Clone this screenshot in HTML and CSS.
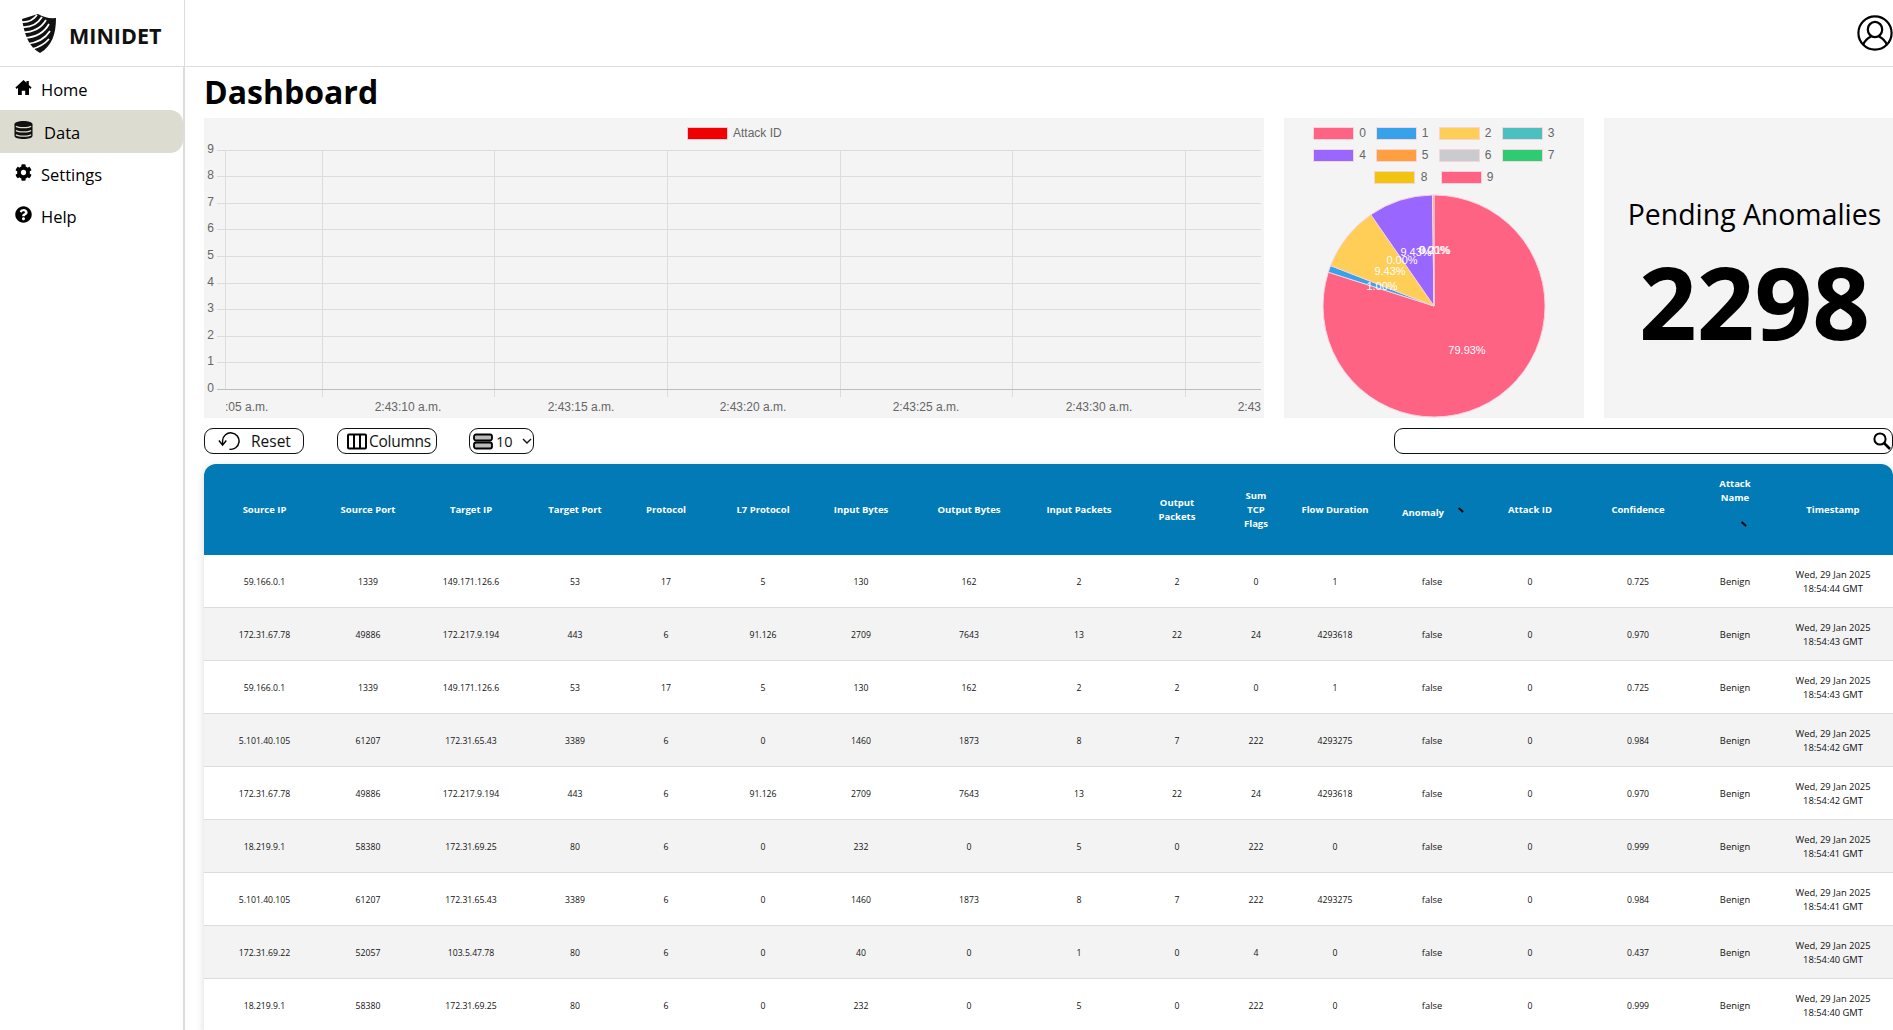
FILE: index.html
```html
<!DOCTYPE html>
<html>

<head>
    <meta charset="utf-8">
    <title>MINIDET</title>
    <link rel="stylesheet" href="styles.css">
</head>

<body>
    <header class="topbar">
        <div class="brand">
            <svg class="brandLogo" viewBox="0 0 34 39">
                <path d="M0 5 L16 0 Q24 5 34 4 C34 20 30 32 18 39 C6 33 2 18 0 5 Z" fill="#111"/>
                <g fill="none" stroke="#fff" stroke-width="1.7">
                    <path d="M-1 8 Q9 9 15 1"/>
                    <path d="M0 13 Q13 14 20 3"/>
                    <path d="M0 18.5 Q17 18 24 6"/>
                    <path d="M2 24 Q20 23 27 10"/>
                    <path d="M5 30 Q21 28 28 17"/>
                    <path d="M10 35 Q21 32 27 25"/>
                </g>
            </svg>
            <span class="brandName">MINIDET</span>
        </div>
        <svg class="userIcon" viewBox="0 0 36 36" fill="none" stroke="#000" stroke-width="2.2">
            <circle cx="18" cy="18" r="16.6"/>
            <ellipse cx="18" cy="14.5" rx="7.2" ry="7.6"/>
            <path d="M6 30 C8 24.5 12 22.5 14 21.5 M30 30 C28 24.5 24 22.5 22 21.5"/>
        </svg>
    </header>

    <div class="layout">
        <nav class="sidebar">
            <a class="navItem">
                <svg class="navIcon" viewBox="0 0 16 16"><path d="M8 1 L0.4 8 L1.6 9.3 L2.8 8.2 V15 H6.4 V11 H9.6 V15 H13.2 V8.2 L14.4 9.3 L15.6 8 L13 5.6 V1.8 H10.8 V3.6 Z"/></svg>
                Home
            </a>
            <a class="navItem navItemActive">
                <svg class="navIcon navIconData" viewBox="0 0 20 20">
                    <path d="M10 0.5 C15 0.5 19.5 1.8 19.5 4 L19.5 16 C19.5 18.2 15 19.5 10 19.5 C5 19.5 0.5 18.2 0.5 16 L0.5 4 C0.5 1.8 5 0.5 10 0.5 Z" fill="#111"/>
                    <g fill="none" stroke="#dddcd0" stroke-width="1.4">
                        <path d="M2 6 C5 8 15 8 18 6"/>
                        <path d="M2 10.5 C5 12.5 15 12.5 18 10.5"/>
                        <path d="M2 15 C5 17 15 17 18 15"/>
                    </g>
                </svg>
                <span class="navDataLabel">Data</span>
            </a>
            <a class="navItem">
                <svg class="navIcon" viewBox="0 0 512 512"><path d="M487.4 315.7l-42.6-24.6c4.3-23.2 4.3-47 0-70.2l42.6-24.6c4.9-2.8 7.1-8.6 5.5-14-11.1-35.6-30-67.8-54.7-94.6-3.8-4.1-10-5.1-14.8-2.3L380.8 110c-17.9-15.4-38.5-27.3-60.8-35.1V25.8c0-5.6-3.9-10.5-9.4-11.7-36.7-8.2-74.3-7.8-109.2 0-5.5 1.2-9.4 6.1-9.4 11.7V75c-22.2 7.9-42.8 19.8-60.8 35.1L88.7 85.5c-4.9-2.8-11-1.9-14.8 2.3-24.7 26.7-43.6 58.9-54.7 94.6-1.7 5.4.6 11.2 5.5 14L67.3 221c-4.3 23.2-4.3 47 0 70.2l-42.6 24.6c-4.9 2.8-7.1 8.6-5.5 14 11.1 35.6 30 67.8 54.7 94.6 3.8 4.1 10 5.1 14.8 2.3l42.6-24.6c17.9 15.4 38.5 27.3 60.8 35.1v49.2c0 5.6 3.9 10.5 9.4 11.7 36.7 8.2 74.3 7.8 109.2 0 5.5-1.2 9.4-6.1 9.4-11.7v-49.2c22.2-7.9 42.8-19.8 60.8-35.1l42.6 24.6c4.9 2.8 11 1.9 14.8-2.3 24.7-26.7 43.6-58.9 54.7-94.6 1.5-5.5-.7-11.3-5.6-14.1zM256 336c-44.1 0-80-35.9-80-80s35.9-80 80-80 80 35.9 80 80-35.9 80-80 80z"/></svg>
                Settings
            </a>
            <a class="navItem">
                <svg class="navIcon" viewBox="0 0 512 512"><path d="M504 256c0 136.997-111.043 248-248 248S8 392.997 8 256C8 119.083 119.043 8 256 8s248 111.083 248 248zM262.655 90c-54.497 0-89.255 22.957-116.549 63.758-3.536 5.286-2.353 12.415 2.715 16.258l34.699 26.31c5.205 3.947 12.621 3.008 16.665-2.122 17.864-22.658 30.113-35.797 57.303-35.797 20.429 0 45.698 13.148 45.698 32.958 0 14.976-12.363 22.667-32.534 33.976C247.128 238.528 216 254.941 216 296v4c0 6.627 5.373 12 12 12h56c6.627 0 12-5.373 12-12v-1.333c0-28.462 83.186-29.647 83.186-106.667 0-58.002-60.165-102-116.531-102zM256 338c-25.365 0-46 20.635-46 46 0 25.364 20.635 46 46 46s46-20.636 46-46c0-25.365-20.635-46-46-46z"/></svg>
                Help
            </a>
        </nav>

        <main class="content">
            <h1 class="pageTitle">Dashboard</h1>

            <section class="cards">
                <div class="card chartCard">
                    <svg class="chartSvg" viewBox="0 0 1060 300" width="1060" height="300">
                        <defs>
                            <clipPath id="plotClip"><rect x="22" y="0" width="1035" height="300"/></clipPath>
                        </defs>
                        <rect x="483.5" y="9.5" width="40" height="12" fill="#f00000" stroke="#f7c6cf"/>
                        <text class="chartLabel" x="529" y="19">Attack ID</text>
                        <g class="gridLines">
                            <path d="M13 32.5H1057M13 58.5H1057M13 85.5H1057M13 111.5H1057M13 138.5H1057M13 165.5H1057M13 191.5H1057M13 218.5H1057M13 244.5H1057"/>
                            <path d="M21.5 32V271M118.5 32V279M290.5 32V279M463.5 32V279M636.5 32V279M808.5 32V279M981.5 32V279"/>
                        </g>
                        <path class="axisLine" d="M13 271.5H1057"/>
                        <g class="chartLabel tickY">
                            <text x="10" y="35">9</text>
                            <text x="10" y="61">8</text>
                            <text x="10" y="88">7</text>
                            <text x="10" y="114">6</text>
                            <text x="10" y="141">5</text>
                            <text x="10" y="168">4</text>
                            <text x="10" y="194">3</text>
                            <text x="10" y="221">2</text>
                            <text x="10" y="247">1</text>
                            <text x="10" y="274">0</text>
                        </g>
                        <g class="chartLabel tickX" clip-path="url(#plotClip)">
                            <text x="31" y="293">2:43:05 a.m.</text>
                            <text x="204" y="293">2:43:10 a.m.</text>
                            <text x="377" y="293">2:43:15 a.m.</text>
                            <text x="549" y="293">2:43:20 a.m.</text>
                            <text x="722" y="293">2:43:25 a.m.</text>
                            <text x="895" y="293">2:43:30 a.m.</text>
                            <text x="1067" y="293">2:43:35 a.m.</text>
                        </g>
                    </svg>
                </div>

                <div class="card pieCard">
                    <svg class="chartSvg" viewBox="0 0 300 300" width="300" height="300">
                        <g class="legendBoxes">
                            <rect x="29.5" y="9.5" width="40" height="12" fill="#ff6384"/>
                            <rect x="92.5" y="9.5" width="40" height="12" fill="#36a2eb"/>
                            <rect x="155.5" y="9.5" width="40" height="12" fill="#ffce56"/>
                            <rect x="218.5" y="9.5" width="40" height="12" fill="#4bc0c0"/>
                            <rect x="29.5" y="31.5" width="40" height="12" fill="#9966ff"/>
                            <rect x="92.5" y="31.5" width="40" height="12" fill="#ff9f40"/>
                            <rect x="155.5" y="31.5" width="40" height="12" fill="#c9cbcf"/>
                            <rect x="218.5" y="31.5" width="40" height="12" fill="#2ecc71"/>
                            <rect x="90.5" y="53.5" width="40" height="12" fill="#f1c40f"/>
                            <rect x="157.5" y="53.5" width="40" height="12" fill="#ff6384"/>
                        </g>
                        <g class="chartLabel legendText">
                            <text x="78.5" y="19">0</text>
                            <text x="141" y="19">1</text>
                            <text x="204" y="19">2</text>
                            <text x="267" y="19">3</text>
                            <text x="78.5" y="41">4</text>
                            <text x="141" y="41">5</text>
                            <text x="204" y="41">6</text>
                            <text x="267" y="41">7</text>
                            <text x="140" y="63">8</text>
                            <text x="206" y="63">9</text>
                        </g>
                        <g class="pieSlices">
                            <path d="M150 188 L150 77 A111 111 0 1 1 44.3 154.2 Z" fill="#ff6384"/>
                            <path d="M150 188 L44.3 154.2 A111 111 0 0 1 46.6 147.6 Z" fill="#36a2eb"/>
                            <path d="M150 188 L46.6 147.6 A111 111 0 0 1 86.8 96.7 Z" fill="#ffce56"/>
                            <path d="M150 188 L86.8 96.7 A111 111 0 0 1 148.5 77 Z" fill="#9966ff"/>
                            <path d="M150 188 L148.5 77 A111 111 0 0 1 150 77 Z" fill="#ff9f40"/>
                        </g>
                        <g class="pieLabels">
                            <text x="183" y="236">79.93%</text>
                            <text x="98" y="172">1.00%</text>
                            <text x="106" y="157">9.43%</text>
                            <text x="118" y="146">0.00%</text>
                            <text x="132" y="138">9.43%</text>
                            <text x="150" y="136">0.00%</text>
                            <text x="151" y="136">0.21%</text>
                        </g>
                    </svg>
                </div>

                <div class="card pendingCard">
                    <div class="pendingTitle">Pending Anomalies</div>
                    <div class="pendingCount">2298</div>
                </div>
            </section>

            <section class="toolbar">
                <button class="toolBtn resetBtn">
                    <svg class="toolIcon" viewBox="0 0 24 24" fill="none" stroke="#000" stroke-width="1.6">
                        <path d="M5 16 V11.5 A9 9 0 1 1 12.5 21"/>
                        <path d="M1 11.5 L5 16.5 L9 11.5"/>
                    </svg>
                    Reset
                </button>
                <button class="toolBtn columnsBtn">
                    <svg class="toolIcon columnsIcon" viewBox="0 0 20 16" fill="none" stroke="#000" stroke-width="2">
                        <rect x="1" y="1" width="18" height="14" rx="1"/>
                        <path d="M7 1V15M13 1V15"/>
                    </svg>
                    Columns
                </button>
                <button class="toolBtn rowsBtn">
                    <svg class="toolIcon rowsIcon" viewBox="0 0 20 16" fill="#bbb" stroke="#000" stroke-width="1.8">
                        <rect x="1" y="1" width="18" height="6" rx="2"/>
                        <rect x="1" y="9" width="18" height="6" rx="2"/>
                    </svg>
                    10
                    <svg class="chevron" viewBox="0 0 10 6" fill="none" stroke="#111" stroke-width="1.4">
                        <path d="M1 1 L5 5 L9 1"/>
                    </svg>
                </button>
                <div class="searchBox">
                    <svg class="searchIcon" viewBox="0 0 18 18" fill="none" stroke="#000" stroke-width="2">
                        <circle cx="7" cy="7" r="5.6"/>
                        <path d="M11 11 L17 17" stroke-width="2.6"/>
                    </svg>
                </div>
            </section>

            <section class="tableWrap">
                <table class="dataTable">
                    <colgroup>
                        <col class="c121"><col class="c86"><col class="c120"><col class="c88"><col class="c94"><col class="c100"><col class="c96"><col class="c120"><col class="c100"><col class="c96"><col class="c62"><col class="c96"><col class="c98"><col class="c98"><col class="c118"><col class="c76"><col class="c120">
                    </colgroup>
                    <thead>
                        <tr>
                            <th>Source IP</th>
                            <th>Source Port</th>
                            <th>Target IP</th>
                            <th>Target Port</th>
                            <th>Protocol</th>
                            <th>L7 Protocol</th>
                            <th>Input Bytes</th>
                            <th>Output Bytes</th>
                            <th>Input Packets</th>
                            <th>Output<br>Packets</th>
                            <th>Sum<br>TCP<br>Flags</th>
                            <th>Flow Duration</th>
                            <th><span class="anomalyHead"><span class="anomalyText">Anomaly</span><i class="sortMark"></i></span></th>
                            <th>Attack ID</th>
                            <th>Confidence</th>
                            <th class="attackHead">Attack<br>Name<i class="sortMark sortMarkBlock"></i></th>
                            <th>Timestamp</th>
                        </tr>
                    </thead>
                    <tbody>
                        <tr><td>59.166.0.1</td><td>1339</td><td>149.171.126.6</td><td>53</td><td>17</td><td>5</td><td>130</td><td>162</td><td>2</td><td>2</td><td>0</td><td>1</td><td>false</td><td>0</td><td>0.725</td><td>Benign</td><td>Wed, 29 Jan 2025<br>18:54:44 GMT</td></tr>
                        <tr><td>172.31.67.78</td><td>49886</td><td>172.217.9.194</td><td>443</td><td>6</td><td>91.126</td><td>2709</td><td>7643</td><td>13</td><td>22</td><td>24</td><td>4293618</td><td>false</td><td>0</td><td>0.970</td><td>Benign</td><td>Wed, 29 Jan 2025<br>18:54:43 GMT</td></tr>
                        <tr><td>59.166.0.1</td><td>1339</td><td>149.171.126.6</td><td>53</td><td>17</td><td>5</td><td>130</td><td>162</td><td>2</td><td>2</td><td>0</td><td>1</td><td>false</td><td>0</td><td>0.725</td><td>Benign</td><td>Wed, 29 Jan 2025<br>18:54:43 GMT</td></tr>
                        <tr><td>5.101.40.105</td><td>61207</td><td>172.31.65.43</td><td>3389</td><td>6</td><td>0</td><td>1460</td><td>1873</td><td>8</td><td>7</td><td>222</td><td>4293275</td><td>false</td><td>0</td><td>0.984</td><td>Benign</td><td>Wed, 29 Jan 2025<br>18:54:42 GMT</td></tr>
                        <tr><td>172.31.67.78</td><td>49886</td><td>172.217.9.194</td><td>443</td><td>6</td><td>91.126</td><td>2709</td><td>7643</td><td>13</td><td>22</td><td>24</td><td>4293618</td><td>false</td><td>0</td><td>0.970</td><td>Benign</td><td>Wed, 29 Jan 2025<br>18:54:42 GMT</td></tr>
                        <tr><td>18.219.9.1</td><td>58380</td><td>172.31.69.25</td><td>80</td><td>6</td><td>0</td><td>232</td><td>0</td><td>5</td><td>0</td><td>222</td><td>0</td><td>false</td><td>0</td><td>0.999</td><td>Benign</td><td>Wed, 29 Jan 2025<br>18:54:41 GMT</td></tr>
                        <tr><td>5.101.40.105</td><td>61207</td><td>172.31.65.43</td><td>3389</td><td>6</td><td>0</td><td>1460</td><td>1873</td><td>8</td><td>7</td><td>222</td><td>4293275</td><td>false</td><td>0</td><td>0.984</td><td>Benign</td><td>Wed, 29 Jan 2025<br>18:54:41 GMT</td></tr>
                        <tr><td>172.31.69.22</td><td>52057</td><td>103.5.47.78</td><td>80</td><td>6</td><td>0</td><td>40</td><td>0</td><td>1</td><td>0</td><td>4</td><td>0</td><td>false</td><td>0</td><td>0.437</td><td>Benign</td><td>Wed, 29 Jan 2025<br>18:54:40 GMT</td></tr>
                        <tr><td>18.219.9.1</td><td>58380</td><td>172.31.69.25</td><td>80</td><td>6</td><td>0</td><td>232</td><td>0</td><td>5</td><td>0</td><td>222</td><td>0</td><td>false</td><td>0</td><td>0.999</td><td>Benign</td><td>Wed, 29 Jan 2025<br>18:54:40 GMT</td></tr>
                    </tbody>
                </table>
            </section>
        </main>
    </div>
</body>

</html>
```

FILE: styles.css
```css
html,
body {
    margin: 0;
    padding: 0;
    height: 100%;
    overflow: hidden;
}

body {
    display: flex;
    flex-direction: column;
    background-color: #fff;
    color: #000;
    font-family: "Open Sans", "Noto Sans", sans-serif;
}

.topbar {
    height: 66px;
    flex: none;
    display: flex;
    align-items: center;
    justify-content: space-between;
    border-bottom: 1px solid #ddd;
}

.brand {
    width: 185px;
    height: 100%;
    display: flex;
    align-items: center;
    gap: 13px;
    padding-left: 22px;
    box-sizing: border-box;
    border-right: 1px solid #ddd;
}

.brandLogo {
    width: 34px;
    height: 39px;
}

.brandName {
    padding-top: 4px;
    font-size: 21.5px;
    font-weight: 700;
    color: #111;
}

.userIcon {
    width: 36px;
    height: 36px;
    margin-right: 0;
}

.layout {
    flex: 1;
    display: flex;
    min-height: 0;
}

.sidebar {
    width: 183px;
    flex: none;
    padding-top: 1px;
    border-right: 2px solid #ddd;
}

.navItem {
    height: 42px;
    display: flex;
    align-items: center;
    gap: 9px;
    padding-left: 15px;
    font-size: 16.5px;
}

.navIcon {
    width: 17px;
    height: 17px;
    margin-top: -4px;
}

.navItemActive {
    height: 43px;
    padding-left: 14px;
    gap: 11px;
    background-color: #dddcd0;
    border-radius: 0 13px 13px 0;
}

.navIconData {
    width: 19px;
    height: 20px;
}

.navDataLabel {
    padding-top: 2px;
}

.content {
    flex: 1;
    min-width: 0;
    padding-left: 19px;
}

.pageTitle {
    height: 51px;
    margin: 0;
    font-size: 32px;
    font-weight: 700;
    line-height: 50px;
}

.cards {
    display: flex;
    gap: 20px;
    height: 300px;
}

.card {
    flex: none;
    background-color: #f4f4f4;
}

.chartCard {
    width: 1060px;
}

.pieCard {
    width: 300px;
}

.pendingCard {
    width: 301px;
    text-align: center;
}

.chartSvg {
    display: block;
}

.chartLabel {
    font-family: "Liberation Sans", Arial, sans-serif;
    font-size: 12px;
    fill: #666;
}

.gridLines {
    fill: none;
    stroke: #dcdcdc;
}

.axisLine {
    fill: none;
    stroke: #bdbdbd;
}

.tickY {
    text-anchor: end;
}

.tickX,
.legendText {
    text-anchor: middle;
}

.legendBoxes rect {
    stroke: #f6d4dc;
}

.pieSlices path {
    stroke: #f6d4dc;
}

.pieLabels {
    font-family: "Liberation Sans", Arial, sans-serif;
    font-size: 11px;
    fill: #fff;
    text-anchor: middle;
}

.pendingTitle {
    margin-top: 73px;
    font-size: 28.4px;
    line-height: 46px;
    white-space: nowrap;
}

.pendingCount {
    margin-top: 4px;
    font-size: 101px;
    font-weight: 700;
    line-height: 120px;
}

.toolbar {
    height: 26px;
    margin-top: 10px;
    display: flex;
    align-items: stretch;
}

.toolBtn {
    display: flex;
    align-items: center;
    padding: 0;
    background: #fff;
    border: 1px solid #111;
    border-radius: 9px;
    font-family: inherit;
    font-size: 15.5px;
    color: #111;
    box-sizing: border-box;
}

.resetBtn {
    width: 100px;
    gap: 11px;
    padding-left: 13px;
    margin-right: 33px;
}

.columnsBtn {
    width: 100px;
    gap: 2px;
    padding-left: 9px;
    margin-right: 32px;
    letter-spacing: -0.25px;
}

.rowsBtn {
    width: 65px;
    gap: 3px;
    padding-left: 3px;
    font-size: 14.5px;
}

.toolIcon {
    width: 22px;
    height: 22px;
}

.columnsIcon,
.rowsIcon {
    width: 20px;
    height: 17px;
}

.chevron {
    width: 10px;
    height: 6px;
    margin-left: 6px;
}

.searchBox {
    width: 499px;
    margin-left: auto;
    display: flex;
    align-items: center;
    justify-content: flex-end;
    padding-right: 1px;
    border: 1px solid #111;
    border-radius: 9px;
    box-sizing: border-box;
}

.searchIcon {
    width: 18px;
    height: 18px;
}

.tableWrap {
    margin-top: 10px;
    box-shadow: 0 2px 8px rgba(0, 0, 0, 0.15);
    border-radius: 12px 12px 0 0;
    overflow: hidden;
}

.dataTable {
    width: 1689px;
    table-layout: fixed;
    border-collapse: collapse;
    font-size: 8.7px;
    line-height: 14px;
    text-align: center;
}

.c62 { width: 62px; }
.c76 { width: 76px; }
.c86 { width: 86px; }
.c88 { width: 88px; }
.c94 { width: 94px; }
.c96 { width: 96px; }
.c98 { width: 98px; }
.c100 { width: 100px; }
.c118 { width: 118px; }
.c120 { width: 120px; }
.c121 { width: 121px; }

.dataTable th {
    height: 90px;
    padding: 1px 0 0;
    background-color: #017ab5;
    color: #fff;
    font-size: 9.5px;
    font-weight: 700;
}

.dataTable td {
    height: 50px;
    padding: 2px 0 0;
    color: #111;
    border-bottom: 1px solid #ddd;
}

/* word columns run wider than the numbers in the same size */
.dataTable td:nth-child(13),
.dataTable td:nth-child(16),
.dataTable td:nth-child(17) {
    font-size: 9.4px;
}

.dataTable tbody tr:nth-child(even) td {
    background-color: #f3f3f3;
}

.anomalyHead {
    display: inline-flex;
    align-items: flex-start;
    gap: 14px;
    margin-left: 2px;
}

.anomalyText {
    padding-top: 6px;
}

.sortMark {
    display: inline-block;
    width: 6px;
    height: 1.6px;
    margin-top: 8.5px;
    background-color: #000;
    transform: rotate(42deg);
}

.sortMarkBlock {
    display: block;
    margin: 17.6px 0 19px 44px;
}
```
